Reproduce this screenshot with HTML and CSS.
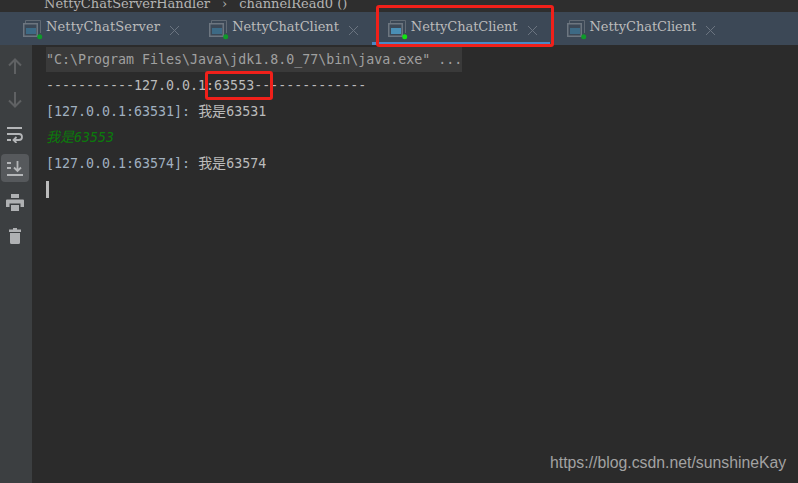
FILE: index.html
```html
<!DOCTYPE html>
<html lang="zh">
<head>
<meta charset="utf-8">
<title>NettyChatClient console</title>
<link rel="stylesheet" href="styles.css">
</head>
<body>
<div class="crumbs"><span class="crumb-text">NettyChatServerHandler</span><span class="crumb-sep">›</span><span class="crumb-text">channelRead0 ()</span></div>
<div class="tabs">
  <div class="tab">
    <svg class="run-icon" width="23" height="21" viewBox="0 0 23 21"><path class="win-back" d="M2.500 4V1.500h15V14"/><rect class="win-front" x=".75" y="4.750" width="13.500" height="12.500"/><rect class="win-screen" x="3" y="9" width="10" height="6"/><circle class="dot" cx="16.700" cy="17.700" r="2.500"/></svg>
    <span class="tab-name">NettyChatServer</span>
    <svg class="close" width="9" height="9" viewBox="0 0 9 9"><path d="M0 0l9 9M9 0L0 9"/></svg>
  </div>
  <div class="tab">
    <svg class="run-icon" width="23" height="21" viewBox="0 0 23 21"><path class="win-back" d="M2.500 4V1.500h15V14"/><rect class="win-front" x=".75" y="4.750" width="13.500" height="12.500"/><rect class="win-screen" x="3" y="9" width="10" height="6"/><circle class="dot" cx="16.700" cy="17.700" r="2.500"/></svg>
    <span class="tab-name">NettyChatClient</span>
    <svg class="close" width="9" height="9" viewBox="0 0 9 9"><path d="M0 0l9 9M9 0L0 9"/></svg>
  </div>
  <div class="tab selected">
    <svg class="run-icon" width="23" height="21" viewBox="0 0 23 21"><path class="win-back" d="M2.500 4V1.500h15V14"/><rect class="win-front" x=".75" y="4.750" width="13.500" height="12.500"/><rect class="win-screen bright" x="3" y="9" width="10" height="6"/><circle class="dot lit" cx="16.700" cy="17.700" r="2.500"/></svg>
    <span class="tab-name">NettyChatClient</span>
    <svg class="close" width="9" height="9" viewBox="0 0 9 9"><path d="M0 0l9 9M9 0L0 9"/></svg>
  </div>
  <div class="tab">
    <svg class="run-icon" width="23" height="21" viewBox="0 0 23 21"><path class="win-back" d="M2.500 4V1.500h15V14"/><rect class="win-front" x=".75" y="4.750" width="13.500" height="12.500"/><rect class="win-screen" x="3" y="9" width="10" height="6"/><circle class="dot" cx="16.700" cy="17.700" r="2.500"/></svg>
    <span class="tab-name">NettyChatClient</span>
    <svg class="close" width="9" height="9" viewBox="0 0 9 9"><path d="M0 0l9 9M9 0L0 9"/></svg>
  </div>
</div>
<div class="body">
  <aside class="tools">
    <svg class="tool" width="14" height="16" viewBox="0 0 14 16"><path class="dim" d="M7 16V1.500M1 7.500l6-6 6 6"/></svg>
    <svg class="tool" width="14" height="16" viewBox="0 0 14 16"><path class="dim" d="M7 0v14.500M1 8.500l6 6 6-6"/></svg>
    <svg class="tool" width="17" height="17" viewBox="0 0 17 17"><path class="on" d="M1 2h15M1 8h12a2.700 2.700 0 0 1 0 6H8M1 14h4M10.500 11L7.500 14l3 3"/></svg>
    <div class="tool-active"><svg width="16" height="16" viewBox="0 0 16 16"><path class="on" d="M0 15h16M0 3h4M0 8h4M10.500 1v10M7 7.500l3.500 3.500L14 7.500"/></svg></div>
    <svg class="tool print" width="18" height="17" viewBox="0 0 18 17"><path class="fill" d="M5 0h8v4H5zM1 5.500h16a1 1 0 0 1 1 1V13h-3.500V9.500h-11V13H0V6.500a1 1 0 0 1 1-1zM5 11h8v6H5z"/></svg>
    <svg class="tool" width="12" height="16" viewBox="0 0 12 16"><path class="fill" d="M4 0h4v1.500h4V4H0V1.500h4zM1 5h10v9.500a1.500 1.500 0 0 1-1.500 1.500h-7A1.500 1.500 0 0 1 1 14.500z"/></svg>
  </aside>
  <main class="console">
    <div class="line first"><span class="cmd">"C:\Program Files\Java\jdk1.8.0_77\bin\java.exe" ...</span></div>
    <div class="line">-----------127.0.0.1:63553--------------</div>
    <div class="line"><span class="addr">[127.0.0.1:63531]:</span> <span class="cjk">我是</span>63531</div>
    <div class="line input"><span class="cjk">我是</span>63553</div>
    <div class="line"><span class="addr">[127.0.0.1:63574]:</span> <span class="cjk">我是</span>63574</div>
    <div class="caret"></div>
  </main>
</div>
<div class="mark mark-tab"></div>
<div class="mark mark-port"></div>
<div class="watermark">https://blog.csdn.net/sunshineKay</div>
</body>
</html>
```
FILE: styles.css
```css
html, body { margin: 0; padding: 0; }
body {
  width: 798px;
  height: 483px;
  overflow: hidden;
  background: #2b2b2b;
  display: flex;
  flex-direction: column;
  position: relative;
  font-family: "DejaVu Sans Mono", monospace;
}
.crumbs {
  height: 12px;
  flex: none;
  overflow: hidden;
  background: #2e2e2e;
  padding-left: 44px;
  display: flex;
  gap: 12px;
  font: 13px/7px "DejaVu Serif", serif;
  color: #b4b4b4;
}
.tabs {
  height: 33px;
  flex: none;
  background: #3c4856;
  display: flex;
  padding-left: 23px;
  box-sizing: border-box;
}
.tab {
  flex: none;
  display: flex;
  align-items: flex-start;
  height: 33px;
  padding-right: 30px;
  position: relative;
}
.tab.selected::after {
  content: "";
  position: absolute;
  left: -16px;
  bottom: 0;
  width: 178px;
  height: 3px;
  background: #4a88c7;
}
.run-icon { flex: none; margin-top: 7px; }
.tab-name {
  font: 13px/30px "DejaVu Serif", serif;
  letter-spacing: -.07px;
  color: #bbbbbb;
  white-space: nowrap;
}
.tab:first-child .tab-name { letter-spacing: .13px; }
.close { margin-left: 10px; margin-top: 14px; flex: none; }
.close path { stroke: #6b7480; stroke-width: 1; fill: none; }
.win-back { fill: none; stroke: #616a74; stroke-width: 1; }
.win-front { fill: #3c4856; stroke: #6d7680; stroke-width: 1.500; }
.win-screen { fill: #3d6a85; }
.win-screen.bright { fill: #4a8fb5; }
.dot { fill: #0f9a2a; }
.dot.lit { fill: #12e512; }
.body { flex: 1; display: flex; min-height: 0; }
.tools {
  width: 32px;
  flex: none;
  box-sizing: border-box;
  padding: 13px 3px 0 0;
  background: #3c3f41;
  display: flex;
  flex-direction: column;
  align-items: center;
  gap: 18px;
}
.tool { flex: none; }
.tool-active {
  width: 28px;
  height: 28px;
  margin: -7px 0 -6px;
  background: #56595c;
  border-radius: 4px;
  display: flex;
  align-items: center;
  justify-content: center;
  flex: none;
}
.print { margin-bottom: -1px; }
.dim { fill: none; stroke: #5f6163; stroke-width: 2; }
.on { fill: none; stroke: #b4b6b8; stroke-width: 1.800; }
.fill { fill: #afb1b3; }
.console {
  flex: 1;
  padding: 2px 0 0 14px;
  font-size: 13.300px;
  color: #bbbbbb;
}
.line { height: 26px; line-height: 26px; white-space: pre; }
.cmd { display: inline-block; height: 25px; line-height: 26px; background: #3a3a3a; color: #a0a0a0; vertical-align: top; }
.addr { color: #a0b0c0; }
.cjk { font-family: "Noto Sans CJK SC", sans-serif; font-size: 14px; line-height: 20px; }
.input { color: #0b7a0b; font-style: italic; }
.caret { width: 3px; height: 17px; margin-top: 4px; background: #bbbbbb; }
.mark { position: absolute; border: 3px solid #f0201a; border-radius: 3px; box-sizing: border-box; }
.mark-tab { left: 376px; top: 5px; width: 178px; height: 42px; }
.mark-port { left: 205px; top: 71px; width: 68px; height: 29px; }
.watermark {
  position: absolute;
  left: 550px;
  top: 454px;
  font: 15.800px "Liberation Sans", sans-serif;
  color: #a2a2a2;
  white-space: nowrap;
}
```
